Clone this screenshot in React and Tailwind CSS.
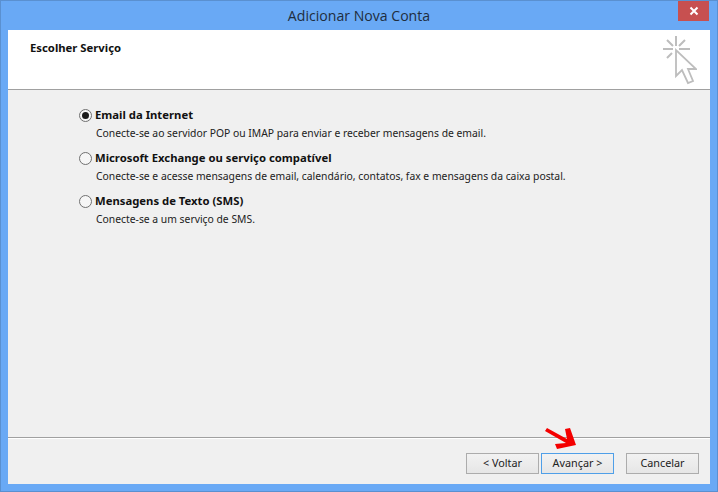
const tahoma = { fontFamily: '"Noto Sans", "DejaVu Sans", sans-serif' };

function Radio({ checked }) {
  return (
    <span className="w-[13px] h-[13px] rounded-full border border-[#707070] bg-[#f6f6f6] flex items-center justify-center shrink-0">
      {checked && <span className="w-[7px] h-[7px] rounded-full bg-[#1a1a1a]" />}
    </span>
  );
}

function Option({ checked, title, desc }) {
  return (
    <div className="flex flex-col h-[43px]">
      <div className="flex items-center gap-[3px] h-[18px]">
        <Radio checked={checked} />
        <span className="text-[11.3px] font-bold text-[#111] leading-[18px] whitespace-nowrap">{title}</span>
      </div>
      <div className="pl-[17px] text-[10.35px] leading-[18px] text-[#222] whitespace-nowrap">{desc}</div>
    </div>
  );
}

function Btn({ children, focus }) {
  return (
    <button className={`w-[73px] h-[21px] flex items-center justify-center text-[10.8px] text-[#222] bg-gradient-to-b from-[#f2f2f2] to-[#e6e6e6] border ${focus ? "border-[#4f9fe8]" : "border-[#acacac]"}`}>
      {children}
    </button>
  );
}

export default function App() {
  return (
    <div className="w-[718px] h-[492px] bg-[#69a9f5] border border-[#5a90d0] flex flex-col" style={tahoma}>
      <div className="h-[29px] shrink-0 flex relative items-center justify-center">
        <span className="text-[14.1px] text-[#1f2d3d] mt-[1px]" style={{ fontFamily: '"Open Sans", sans-serif' }}>Adicionar Nova Conta</span>
        <div className="absolute right-[8px] top-0 w-[31px] h-[20px] bg-[#c75050] flex items-center justify-center">
          <svg width="10" height="10" viewBox="0 0 10 10"><path d="M1.5 1.5 L8.5 8.5 M8.5 1.5 L1.5 8.5" stroke="#fff" strokeWidth="2" /></svg>
        </div>
      </div>
      <div className="mx-[7px] h-[454px] flex flex-col bg-[#f0f0f0]">
        <div className="h-[59px] shrink-0 bg-white border-b border-[#a0a0a0] flex justify-between relative box-content">
          <div className="pl-[22px] pt-[10px] text-[11.3px] font-bold text-[#111] leading-[16px]">Escolher Serviço</div>
          <svg className="mr-[13px] mt-[6px]" width="34" height="50" viewBox="0 0 34 50" fill="none">
            <g stroke="#bdbdbd" strokeWidth="2">
              <path d="M13 0 V10 M0 13 H10 M16 13 H27 M4 4 L10 10 M22 4 L16 10 M4 22 L9 17" />
              <path d="M13 14 V40 L19 34 L25 47 L30 45 L25 33 L33 33 Z" fill="#fff" strokeWidth="1.8" />
            </g>
          </svg>
        </div>
        <div className="flex-1 pl-[71px] pt-[16px]">
          <Option checked title="Email da Internet" desc="Conecte-se ao servidor POP ou IMAP para enviar e receber mensagens de email." />
          <Option title="Microsoft Exchange ou serviço compatível" desc="Conecte-se e acesse mensagens de email, calendário, contatos, fax e mensagens da caixa postal." />
          <Option title="Mensagens de Texto (SMS)" desc="Conecte-se a um serviço de SMS." />
        </div>
        <div className="h-[47px] shrink-0 border-t border-[#a0a0a0] relative">
          <div className="h-px bg-white" />
          <div className="flex justify-end pt-[14px] pr-[11px]">
            <Btn>&lt; Voltar</Btn>
            <div className="w-[2px]" />
            <Btn focus>Avançar &gt;</Btn>
            <div className="ml-[12px]"><Btn>Cancelar</Btn></div>
          </div>
          <svg className="absolute left-[537px] top-[-10px]" width="32" height="22" viewBox="0 0 32 22" fill="#f40000">
            <path d="M0 3 L2 0 L22 11 L20 1 L25 0 L31 17 L12 21 L10 16 L21 15 L0 3 Z" />
          </svg>
        </div>
      </div>
    </div>
  );
}
